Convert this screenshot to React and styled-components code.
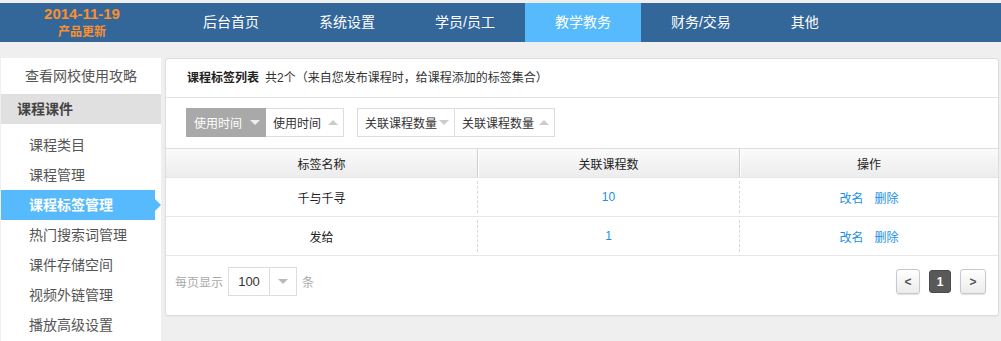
import React from "react";
import styled, { createGlobalStyle, css } from "styled-components";

const GlobalStyle = createGlobalStyle`
  body {
    margin: 0;
    background: #efefef;
    font-family: "Liberation Sans", "Noto Sans CJK SC", sans-serif;
    font-size: 12px;
    color: #333;
  }
`;

const Page = styled.div`
  padding-top: 3px;
`;

const TopBar = styled.div`
  height: 39px;
  background: #336699;
  display: flex;
`;

const Logo = styled.div`
  width: 164px;
  margin-right: 9px;
  display: flex;
  flex-direction: column;
  justify-content: center;
  align-items: center;
  color: #fb8f2f;
  font-weight: bold;
  line-height: 18px;
`;

const LogoDate = styled.div`
  font-size: 15px;
`;

const LogoNote = styled.div`
  font-size: 12px;
`;

const NavItem = styled.div`
  padding: 0 30px;
  line-height: 39px;
  font-size: 14px;
  color: #fff;
  white-space: nowrap;
  background: ${(p) => (p.$active ? "#56bafc" : "transparent")};
`;

const Main = styled.div`
  display: flex;
  gap: 4px;
  padding: 16px 2px 0 1px;
`;

const Sidebar = styled.div`
  width: 160px;
  height: 283px;
  background: #fff;
  flex-shrink: 0;
`;

const GuideLink = styled.div`
  height: 36px;
  line-height: 36px;
  padding-left: 24px;
  font-size: 14px;
  color: #555;
`;

const SideHeader = styled.div`
  height: 30px;
  line-height: 30px;
  padding-left: 16px;
  background: #e0e0e0;
  font-size: 14px;
  font-weight: bold;
  color: #444;
`;

const SideList = styled.div`
  padding-top: 6px;
`;

const SideItem = styled.div`
  position: relative;
  height: 30px;
  line-height: 30px;
  padding-left: 28px;
  width: 126px;
  font-size: 14px;
  color: #555;
  ${(p) =>
    p.$active &&
    css`
      background: #56bafc;
      color: #fff;
      font-weight: bold;
      &::after {
        content: "";
        position: absolute;
        right: -6px;
        top: 9px;
        border-left: 6px solid #56bafc;
        border-top: 6px solid transparent;
        border-bottom: 6px solid transparent;
      }
    `}
`;

const Card = styled.div`
  flex: 1;
  height: 256px;
  background: #fff;
  border: 1px solid #ddd;
  border-radius: 3px;
  box-shadow: 0 1px 1px rgba(0, 0, 0, 0.04);
`;

const CardHeader = styled.div`
  height: 38px;
  line-height: 38px;
  padding-left: 21px;
  border-bottom: 1px solid #e2e2e2;
  color: #333;
`;

const Title = styled.b`
  margin-right: 6px;
  color: #222;
`;

const Filters = styled.div`
  display: flex;
  gap: 13px;
  padding: 10px 20px 11px;
`;

const SortGroup = styled.div`
  display: flex;
  height: 29px;
`;

const SortBtn = styled.div`
  display: flex;
  align-items: center;
  justify-content: space-between;
  padding: 0 5px 0 7px;
  font-size: 12px;
  white-space: nowrap;
  box-sizing: border-box;
  width: ${(p) => p.$w}px;
  color: ${(p) => (p.$on ? "#fff" : "#333")};
  background: ${(p) => (p.$on ? "#a9a9a9" : "#fff")};
  border: 1px solid ${(p) => (p.$on ? "#a9a9a9" : "#ddd")};
  & + & {
    border-left: none;
  }
`;

const Caret = styled.span`
  width: 0;
  height: 0;
  border-left: 5px solid transparent;
  border-right: 5px solid transparent;
  ${(p) =>
    p.$up
      ? css`border-bottom: 5px solid ${p.$c};`
      : css`border-top: 5px solid ${p.$c};`}
`;

const Row = styled.div`
  display: flex;
  height: ${(p) => (p.$head ? 28 : 38)}px;
  border-bottom: 1px solid #e6e6e6;
  ${(p) =>
    p.$head &&
    css`
      border-top: 1px solid #ddd;
      background: linear-gradient(#fbfbfb, #ececec);
    `}
`;

const Cell = styled.div`
  width: ${(p) => (p.$w ? `${p.$w}px` : "auto")};
  flex: ${(p) => (p.$w ? "none" : 1)};
  display: flex;
  align-items: center;
  justify-content: center;
  gap: 11px;
  color: ${(p) => (p.$blue ? "#1a8fe6" : "#222")};
  ${(p) =>
    p.$head
      ? css`
          &:not(:last-child) {
            border-right: 1px solid #cfcfcf;
            box-shadow: 1px 0 0 #fff;
          }
        `
      : css`
          margin: 3px 0;
          &:not(:last-child) {
            border-right: 1px dashed #d8d8d8;
          }
        `}
`;

const Footer = styled.div`
  display: flex;
  justify-content: space-between;
  align-items: center;
  padding: 11px 12px 0 9px;
`;

const PageSize = styled.div`
  display: flex;
  align-items: center;
  gap: 5px;
  color: #aaa;
`;

const Select = styled.div`
  display: flex;
  height: 29px;
  box-sizing: border-box;
  border: 1px solid #ddd;
`;

const SelectValue = styled.div`
  width: 40px;
  line-height: 27px;
  text-align: center;
  font-size: 13px;
  color: #333;
  border-right: 1px solid #ddd;
`;

const SelectArrow = styled.div`
  width: 26px;
  display: flex;
  align-items: center;
  justify-content: center;
`;

const Pager = styled.div`
  display: flex;
  align-items: center;
  gap: 9px;
`;

const PageBtn = styled.div`
  box-sizing: border-box;
  width: ${(p) => p.$w}px;
  height: ${(p) => (p.$cur ? 23 : 25)}px;
  display: flex;
  align-items: center;
  justify-content: center;
  font-size: 12px;
  font-weight: bold;
  border-radius: 3px;
  ${(p) =>
    p.$cur
      ? css`
          background: #595959;
          color: #fff;
          border: 1px solid #4a4a4a;
        `
      : css`
          background: linear-gradient(#ffffff, #ececec);
          color: #555;
          border: 1px solid #c8c8c8;
          box-shadow: 0 1px 1px rgba(0, 0, 0, 0.12);
        `}
`;

const navs = ["后台首页", "系统设置", "学员/员工", "教学教务", "财务/交易", "其他"];
const subs = ["课程类目", "课程管理", "课程标签管理", "热门搜索词管理", "课件存储空间", "视频外链管理", "播放高级设置"];
const tags = [
  { name: "千与千寻", count: 10 },
  { name: "发给", count: 1 },
];

export default function App() {
  return (
    <Page>
      <GlobalStyle />
      <TopBar>
        <Logo>
          <LogoDate>2014-11-19</LogoDate>
          <LogoNote>产品更新</LogoNote>
        </Logo>
        {navs.map((n) => (
          <NavItem key={n} $active={n === "教学教务"}>
            {n}
          </NavItem>
        ))}
      </TopBar>
      <Main>
        <Sidebar>
          <GuideLink>查看网校使用攻略</GuideLink>
          <SideHeader>课程课件</SideHeader>
          <SideList>
            {subs.map((s) => (
              <SideItem key={s} $active={s === "课程标签管理"}>
                {s}
              </SideItem>
            ))}
          </SideList>
        </Sidebar>
        <Card>
          <CardHeader>
            <Title>课程标签列表</Title>共2个（来自您发布课程时，给课程添加的标签集合）
          </CardHeader>
          <Filters>
            <SortGroup>
              <SortBtn $on $w={80}>
                使用时间 <Caret $c="#eee" />
              </SortBtn>
              <SortBtn $w={78}>
                使用时间 <Caret $up $c="#ccc" />
              </SortBtn>
            </SortGroup>
            <SortGroup>
              <SortBtn $w={98}>
                关联课程数量 <Caret $c="#ccc" />
              </SortBtn>
              <SortBtn $w={100}>
                关联课程数量 <Caret $up $c="#ccc" />
              </SortBtn>
            </SortGroup>
          </Filters>
          <Row $head>
            <Cell $head $w={311}>标签名称</Cell>
            <Cell $head $w={261}>关联课程数</Cell>
            <Cell $head>操作</Cell>
          </Row>
          {tags.map((t) => (
            <Row key={t.name}>
              <Cell $w={311}>{t.name}</Cell>
              <Cell $w={261} $blue>
                {t.count}
              </Cell>
              <Cell $blue>
                <span>改名</span>
                <span>删除</span>
              </Cell>
            </Row>
          ))}
          <Footer>
            <PageSize>
              每页显示
              <Select>
                <SelectValue>100</SelectValue>
                <SelectArrow>
                  <Caret $c="#bbb" />
                </SelectArrow>
              </Select>
              条
            </PageSize>
            <Pager>
              <PageBtn $w={24}>&lt;</PageBtn>
              <PageBtn $cur $w={22}>1</PageBtn>
              <PageBtn $w={26}>&gt;</PageBtn>
            </Pager>
          </Footer>
        </Card>
      </Main>
    </Page>
  );
}
